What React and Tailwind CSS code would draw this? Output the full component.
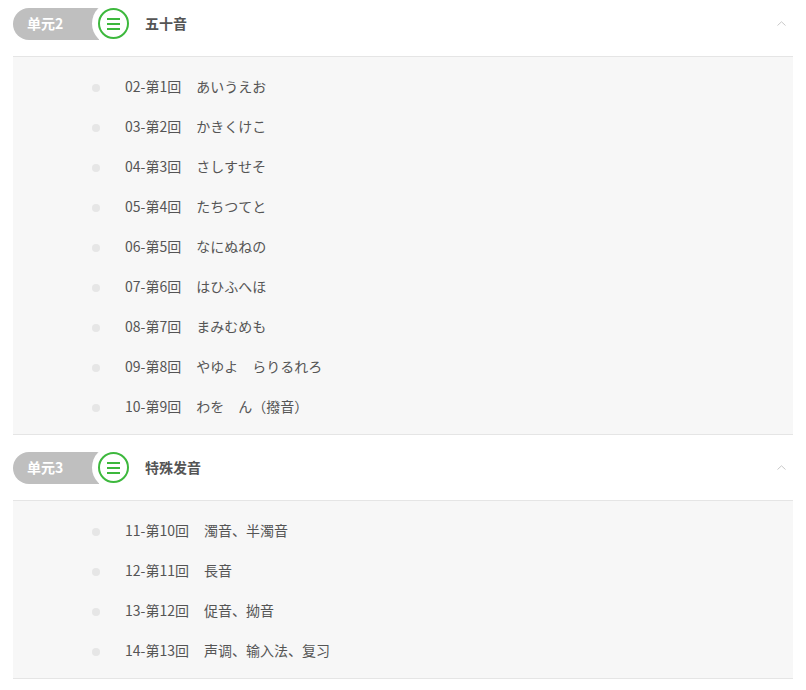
import React from 'react';

const units = [
  {
    unit: '单元2',
    title: '五十音',
    lessons: [
      ['02-第1回', 'あいうえお'],
      ['03-第2回', 'かきくけこ'],
      ['04-第3回', 'さしすせそ'],
      ['05-第4回', 'たちつてと'],
      ['06-第5回', 'なにぬねの'],
      ['07-第6回', 'はひふへほ'],
      ['08-第7回', 'まみむめも'],
      ['09-第8回', 'やゆよ　らりるれろ'],
      ['10-第9回', 'わを　ん（撥音）'],
    ],
  },
  {
    unit: '单元3',
    title: '特殊发音',
    lessons: [
      ['11-第10回', '濁音、半濁音'],
      ['12-第11回', '長音'],
      ['13-第12回', '促音、拗音'],
      ['14-第13回', '声调、输入法、复习'],
    ],
  },
];

const UnitHeader = ({ unit, title }) => (
  <div className="h-[66px] flex items-center border-b border-[#e5e5e5]">
    <div className="shrink-0 w-[86px] h-8 rounded-l-full bg-[#bfbfbf] flex items-center pl-[14px] text-white font-bold text-[14px]">
      {unit}
    </div>
    <div className="relative shrink-0 -ml-[7px] w-[43px] h-[43px] rounded-full bg-white flex items-center justify-center">
      <div className="w-[31px] h-[31px] rounded-full border-2 border-[#3db83d] flex flex-col items-center justify-center gap-[3px]">
        <span className="block w-[13px] h-[2px] bg-[#3db83d]" />
        <span className="block w-[13px] h-[2px] bg-[#3db83d]" />
        <span className="block w-[13px] h-[2px] bg-[#3db83d]" />
      </div>
    </div>
    <div className="ml-[10px] font-bold text-[14px] text-[#555]">{title}</div>
    <svg className="ml-auto mr-[7px]" width="9" height="5" viewBox="0 0 9 5">
      <polyline points="0.5,4.5 4.5,0.8 8.5,4.5" fill="none" stroke="#c8c8c8" strokeWidth="1" />
    </svg>
  </div>
);

const App = () => {
  return (
    <div
      className="min-h-screen bg-white overflow-hidden"
      style={{ fontFamily: '"Noto Sans CJK SC", "Noto Sans", sans-serif' }}
    >
      <div className="mx-[13px] -mt-[9px]">
        {units.map((u) => (
          <div key={u.unit}>
            <UnitHeader unit={u.unit} title={u.title} />
            <div className="bg-[#f7f7f7] border-b border-[#e5e5e5] pt-[9px] pb-[8px]">
              {u.lessons.map(([no, name]) => (
                <div key={no} className="h-10 flex items-center pl-[79px]">
                  <span className="shrink-0 w-[8px] h-[8px] rounded-full bg-[#e6e6e6] mt-[3px]" />
                  <span className="ml-[25px] text-[14px] text-[#555]">{no}</span>
                  <span className="ml-[15px] text-[14px] text-[#555]">{name}</span>
                </div>
              ))}
            </div>
          </div>
        ))}
      </div>
    </div>
  );
};

export default App;
